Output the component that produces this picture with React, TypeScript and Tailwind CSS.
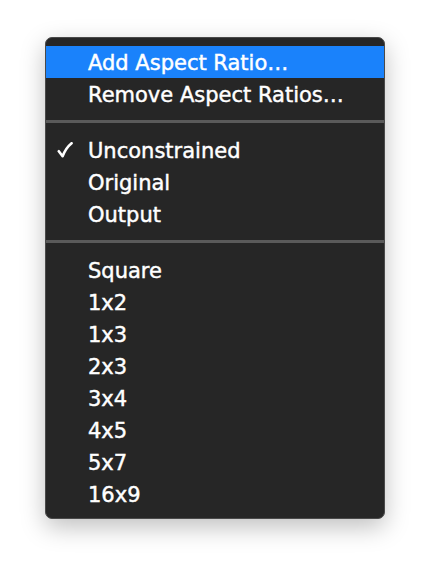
const items: (string | null)[] = [
  "Add Aspect Ratio…",
  "Remove Aspect Ratios…",
  null,
  "Unconstrained",
  "Original",
  "Output",
  null,
  "Square",
  "1x2",
  "1x3",
  "2x3",
  "3x4",
  "4x5",
  "5x7",
  "16x9",
];

function Check() {
  return (
    <svg viewBox="0 0 16 16" className="w-[16px] h-[16px]" fill="none">
      <path
        d="M1.8 9.2 L5.6 14.2 C7.8 8.6 10.6 4.4 14.6 1.2"
        stroke="white"
        strokeWidth="2.6"
        strokeLinecap="round"
        strokeLinejoin="round"
      />
    </svg>
  );
}

export default function App() {
  return (
    <div className="w-[430px] h-[572px] bg-white pt-[37px] pl-[45px]">
      <div
        className="w-[340px] rounded-[7px] border border-[#4a4a4a] bg-[#262626] py-[8px] shadow-[0_8px_24px_rgba(0,0,0,0.25)] text-white text-[21px] [-webkit-text-stroke:0.45px_white]"
        style={{ fontFamily: '"DejaVu Sans", "Liberation Sans", sans-serif' }}
      >
        {items.map((label, i) =>
          label === null ? (
            <div key={i} className="h-[3px] mt-[10px] mb-[11px] bg-[#5a5a5a]" />
          ) : (
            <div
              key={i}
              className={`flex items-center h-[32px] ${i === 0 ? "bg-[#1a82fb]" : ""}`}
            >
              <span className="w-[42px] pl-[11px] flex items-center">
                {label === "Unconstrained" ? <Check /> : null}
              </span>
              <span className="translate-y-[2px]">{label}</span>
            </div>
          )
        )}
      </div>
    </div>
  );
}
